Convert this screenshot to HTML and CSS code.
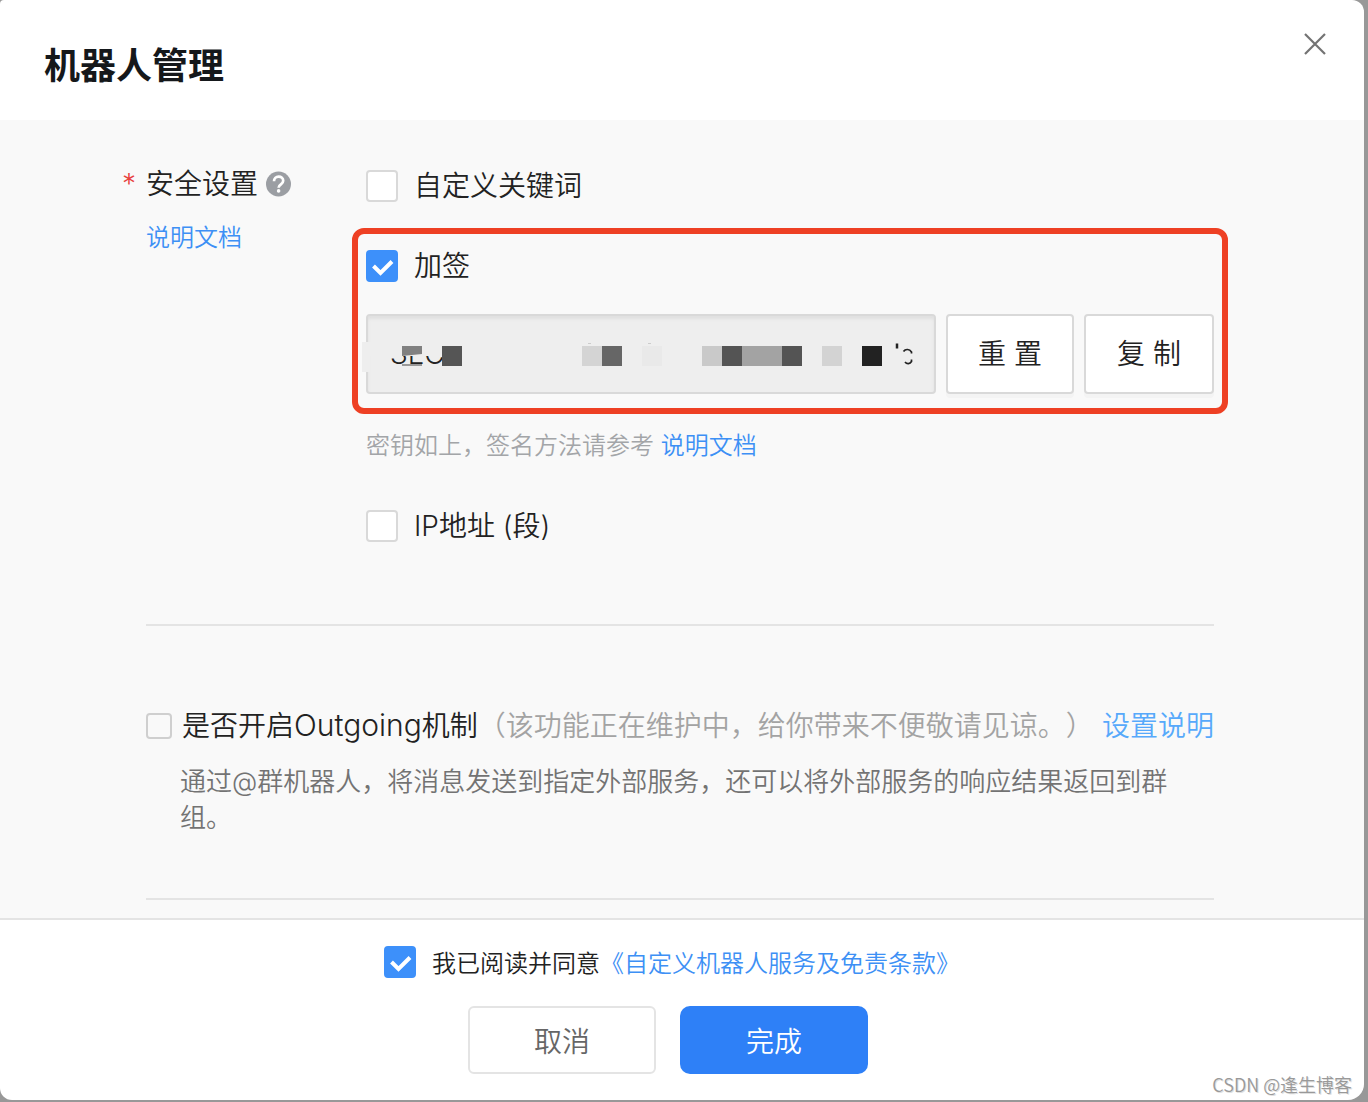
FILE: index.html
```html
<!DOCTYPE html>
<html lang="zh-CN">
<head>
<meta charset="utf-8">
<meta name="viewport" content="width=device-width, initial-scale=1">
<title>机器人管理</title>
<link rel="stylesheet" href="styles.css">
</head>
<body>
<main class="dialog" role="dialog" aria-labelledby="dialog-title">
  <header class="dialog-header">
    <h1 class="dialog-title" id="dialog-title">机器人管理</h1>
    <button class="close" type="button" aria-label="关闭">
      <svg width="22" height="22" viewBox="0 0 22 22" fill="none" stroke="#737373" stroke-width="2.200"><path d="M1 1l20 20M21 1l-20 20"/></svg>
    </button>
  </header>

  <form class="dialog-body" id="robot-form">
    <section class="security">
      <div class="field-label">
        <div class="field-name">
          <span class="required">*</span>
          <span>安全设置</span>
          <svg class="help" width="26" height="26" viewBox="0 0 26 26"><circle cx="12.500" cy="13" r="12.500" fill="#9b9ea3"/><path d="M8 10.200c0-2.700 1.900-4.500 4.600-4.500s4.600 1.600 4.600 4c0 1.800-.9 2.700-2.300 3.700-1.600 1.100-2.300 1.700-2.300 3.300" fill="none" stroke="#fff" stroke-width="2.700"/><circle cx="12.600" cy="19.900" r="1.800" fill="#fff"/></svg>
        </div>
        <a class="doc-link" href="#doc">说明文档</a>
      </div>

      <div class="options">
        <label class="option"><input class="check" type="checkbox"><span>自定义关键词</span></label>

        <div class="highlight">
          <label class="option"><input class="check" type="checkbox" checked><span>加签</span></label>
          <div class="secret-row">
            <div class="secret">
              <input class="secret-input" type="text" value="SEC" aria-label="密钥" readonly>
              <svg class="mosaic" width="556" height="32" viewBox="0 0 556 32" aria-hidden="true">
                <rect width="90" height="14" fill="#eee"/>
                <rect width="8" height="30" fill="#eee"/>
                <path d="M40 4h20v8l-20 2z" fill="#808080"/>
                <rect x="40" y="22" width="20" height="2" fill="#999"/>
                <rect x="80" y="4" width="20" height="20" fill="#555"/>
                <rect x="220" y="4" width="20" height="20" fill="#d4d4d4"/>
                <rect x="240" y="4" width="20" height="20" fill="#666"/>
                <rect x="280" y="4" width="20" height="20" fill="#e9e9e9"/>
                <rect x="340" y="4" width="20" height="20" fill="#c9c9c9"/>
                <rect x="360" y="4" width="20" height="20" fill="#545454"/>
                <rect x="380" y="4" width="40" height="20" fill="#a3a3a3"/>
                <rect x="420" y="4" width="20" height="20" fill="#545454"/>
                <rect x="460" y="4" width="20" height="20" fill="#d3d3d3"/>
                <rect x="500" y="4" width="20" height="20" fill="#222"/>
                <path d="M226 1.500h3M286 1.500h3" stroke="#ccc"/>
                <path d="M535 1.500v5" stroke="#222" stroke-width="2.500"/>
                <path d="M541.500 9.500c2-3 6-2.500 8 .5v1.500M543 20c2 2.500 5 2 6.500-.5v-2" fill="none" stroke="#222" stroke-width="1.700"/>
              </svg>
            </div>
            <button class="tool" type="button">重 置</button>
            <button class="tool" type="button">复 制</button>
          </div>
        </div>

        <p class="hint">密钥如上，签名方法请参考 <a href="#sign">说明文档</a></p>
        <label class="option"><input class="check" type="checkbox"><span>IP地址 (段)</span></label>
      </div>
    </section>

    <section class="outgoing">
      <div class="outgoing-head">
        <label class="outgoing-label"><input class="check check-small" type="checkbox" disabled><span>是否开启<span class="latin">Outgoing</span>机制<span class="muted">（该功能正在维护中，给你带来不便敬请见谅。）</span></span></label>
        <a class="setup-link" href="#setup">设置说明</a>
      </div>
      <p class="outgoing-text">通过@群机器人，将消息发送到指定外部服务，还可以将外部服务的响应结果返回到群组。</p>
    </section>
  </form>

  <footer class="dialog-footer">
    <div class="agreement">
      <input class="check" id="agree" type="checkbox" checked>
      <label for="agree">我已阅读并同意</label><a href="#terms">《自定义机器人服务及免责条款》</a>
    </div>
    <div class="actions">
      <button class="action" type="button">取消</button>
      <button class="action action-primary" type="submit" form="robot-form">完成</button>
    </div>
  </footer>
  <span class="watermark">CSDN @逢生博客</span>
</main>
</body>
</html>
```

FILE: styles.css
```css
* { box-sizing: border-box; }

body {
  margin: 0;
  padding: 0 4px 2px 0;
  min-height: 100vh;
  background: #989898;
  color: #222;
  font-family: Inter, "Noto Sans CJK SC", sans-serif;
  font-size: 28px;
  font-weight: 350;
  line-height: 40px;
  text-spacing-trim: space-all;
}

h1, p { margin: 0; }

a {
  color: #3d90f5;
  text-decoration: none;
}

button, input { font: inherit; }
button { cursor: pointer; }

.dialog {
  position: relative;
  overflow: hidden;
  background: #fff;
  border-radius: 4px 12px 16px 12px;
}

.dialog-header {
  display: flex;
  justify-content: space-between;
  align-items: flex-start;
  height: 120px;
  padding: 32px 37px 0 44px;
}

.dialog-title {
  color: #15181b;
  font-size: 36px;
  font-weight: 700;
  line-height: 68px;
}

.close {
  display: flex;
  padding: 1px;
  border: 0;
  background: none;
}

.dialog-body {
  padding: 46px 150px 18px 146px;
  background: #f9f9f9;
}

.security {
  display: grid;
  grid-template-columns: 220px 1fr;
  padding-bottom: 78px;
  border-bottom: 2px solid #e4e4e4;
}

.field-label { line-height: 36px; }

.field-name {
  display: flex;
  align-items: center;
  gap: 8px;
  margin-left: -24px;
}

.required { width: 16px; color: #e8413c; }

.doc-link {
  display: block;
  margin-top: 18px;
  font-size: 24px;
}

.option {
  display: flex;
  align-items: center;
  gap: 16px;
}

.check {
  appearance: none;
  flex: none;
  width: 32px;
  height: 32px;
  margin: 0;
  border: 2px solid #d9d9d9;
  border-radius: 4px;
  background: #fff;
}

.check:checked {
  border-color: #3d90fa;
  background: #3d90fa url("data:image/svg+xml,%3Csvg xmlns='http://www.w3.org/2000/svg' viewBox='0 0 28 28'%3E%3Cpath d='M5.500 14l7 7L24 9.500' fill='none' stroke='%23fff' stroke-width='4'/%3E%3C/svg%3E") center / 28px 28px no-repeat;
}

.check-small {
  width: 26px;
  height: 26px;
  border-color: #cfcfcf;
  background: #f9f9f9;
}

.highlight {
  margin: 22px -14px 0;
  padding: 12px 8px 14px;
  border: 6px solid #ee4024;
  border-radius: 12px;
}

.secret-row {
  display: grid;
  grid-template-columns: 1fr 128px 130px;
  gap: 10px;
  margin-top: 28px;
}

.secret { position: relative; }

.secret-input {
  display: block;
  width: 100%;
  height: 80px;
  padding: 0 22px;
  border: 2px solid #d9d9d9;
  border-radius: 4px;
  background: #eee;
  box-shadow: inset 0 3px 3px #e0e0e0;
  color: #222;
}

/* Redaction blocks over the secret value */
.mosaic {
  position: absolute;
  top: 28px;
  left: -4px;
}

.tool {
  height: 80px;
  padding: 0;
  border: 2px solid #d9d9d9;
  border-radius: 4px;
  background: #fff;
  box-shadow: 0 4px 0 #f4f4f4;
  color: #222;
}

.hint {
  margin: 12px 0 40px;
  color: #a3a5a8;
  font-size: 24px;
}

.outgoing {
  padding: 80px 0 62px;
  border-bottom: 2px solid #e4e4e4;
}

.outgoing-head {
  display: flex;
  justify-content: space-between;
}

.outgoing-label {
  display: flex;
  align-items: center;
  gap: 10px;
}

.latin { font-size: 30px; line-height: 30px; }
.muted { color: #a3a3a3; }
.setup-link { color: #57a9fb; white-space: nowrap; }

.outgoing-text {
  margin: 18px 40px 0 34px;
  color: #737373;
  font-size: 26px;
  line-height: 36px;
}

.dialog-footer {
  padding: 22px 0 26px;
  border-top: 2px solid #e4e4e4;
  font-family: "Noto Sans CJK SC", sans-serif;
}

.agreement {
  display: flex;
  justify-content: center;
  align-items: center;
  padding-right: 20px;
  font-size: 24px;
}

.agreement .check { margin-right: 16px; }

.actions {
  display: flex;
  justify-content: center;
  gap: 24px;
  margin-top: 24px;
  padding-right: 28px;
}

.action {
  width: 188px;
  height: 68px;
  padding: 0;
  border: 2px solid #e4e4e4;
  border-radius: 6px;
  background: #fff;
  color: #666;
}

.action-primary {
  border: 0;
  border-radius: 10px;
  background: #2e80f7;
  color: #fff;
}

.watermark {
  position: absolute;
  right: 12px;
  bottom: 6px;
  color: #999;
  font-family: "Noto Sans CJK SC", sans-serif;
  font-size: 18px;
  line-height: 20px;
  text-shadow: 1px 1px 0 #e0e0e0;
}
```
